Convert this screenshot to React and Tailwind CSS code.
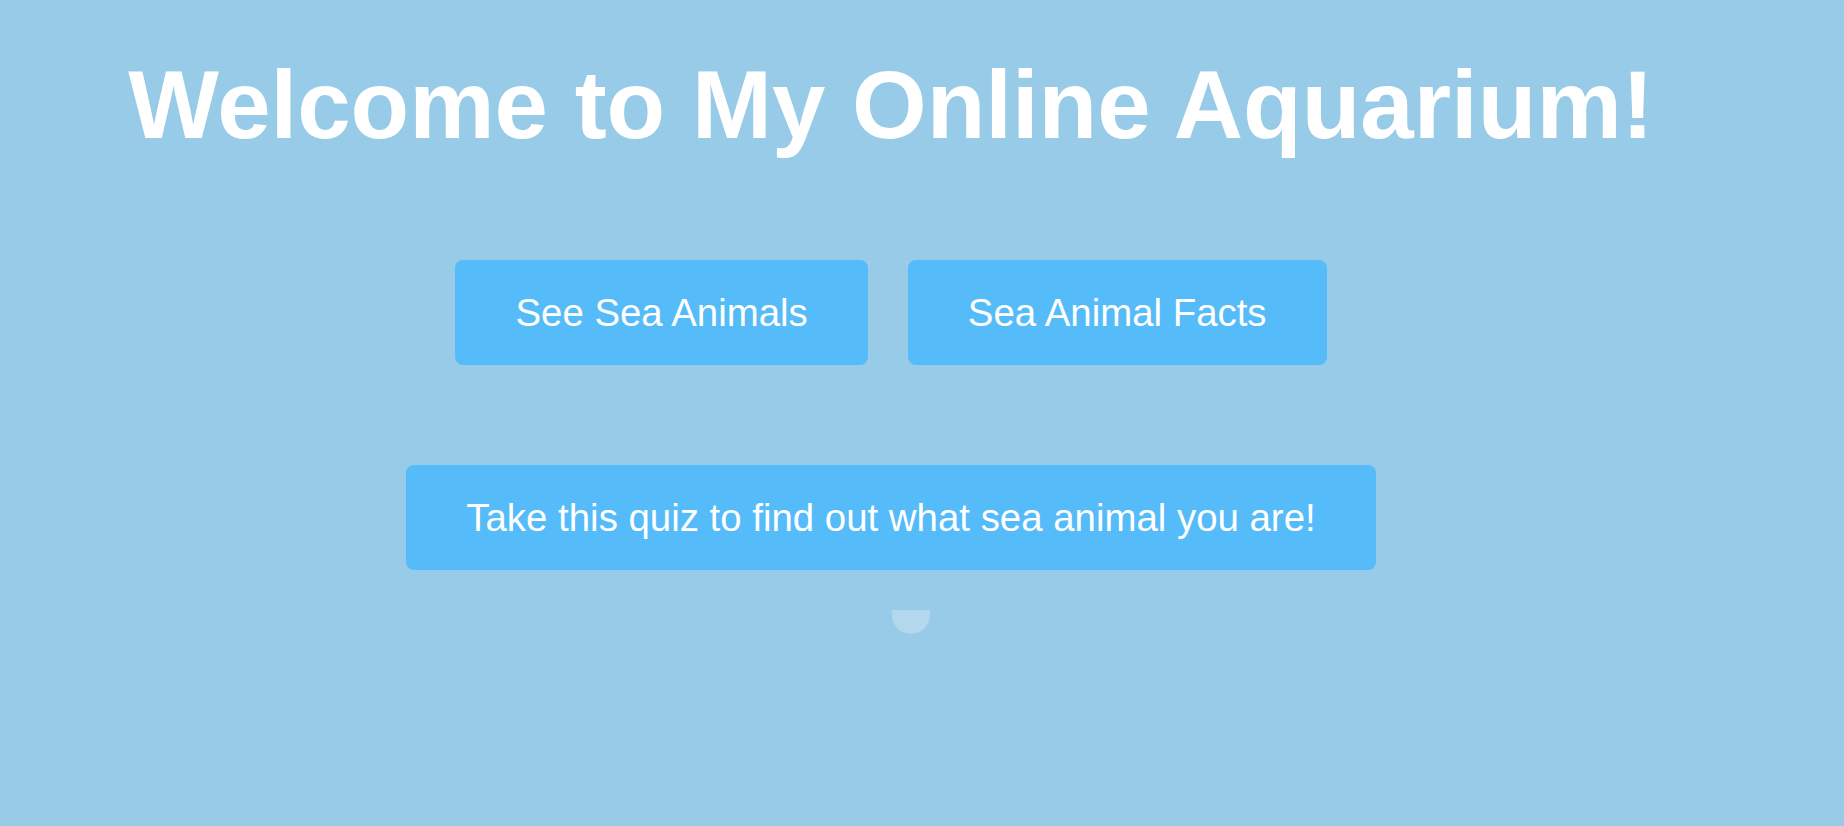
const Button = ({ children }) => {
  return (
    <button className="h-[105px] px-[60px] inline-flex items-center justify-center bg-[#56bbf9] text-white text-[38.4px] rounded-lg">
      {children}
    </button>
  );
};

const App = () => {
  return (
    <div
      className="min-h-screen w-full bg-[#97cbe8]"
      style={{ fontFamily: '"Liberation Sans", Arial, sans-serif' }}
    >
      <div className="w-[1782px] flex flex-col items-center pt-[57px]">
        <h1 className="text-8xl leading-none font-bold text-white">
          Welcome to My Online Aquarium!
        </h1>

        <div className="flex gap-10 mt-[107px]">
          <Button>See Sea Animals</Button>
          <Button>Sea Animal Facts</Button>
        </div>

        <div className="mt-[100px]">
          <Button>Take this quiz to find out what sea animal you are!</Button>
        </div>

        <div className="mt-10 ml-10 w-[38px] h-[24px] rounded-b-[19px] bg-[#b3d8ed]" />
      </div>
    </div>
  );
};

export default App;
